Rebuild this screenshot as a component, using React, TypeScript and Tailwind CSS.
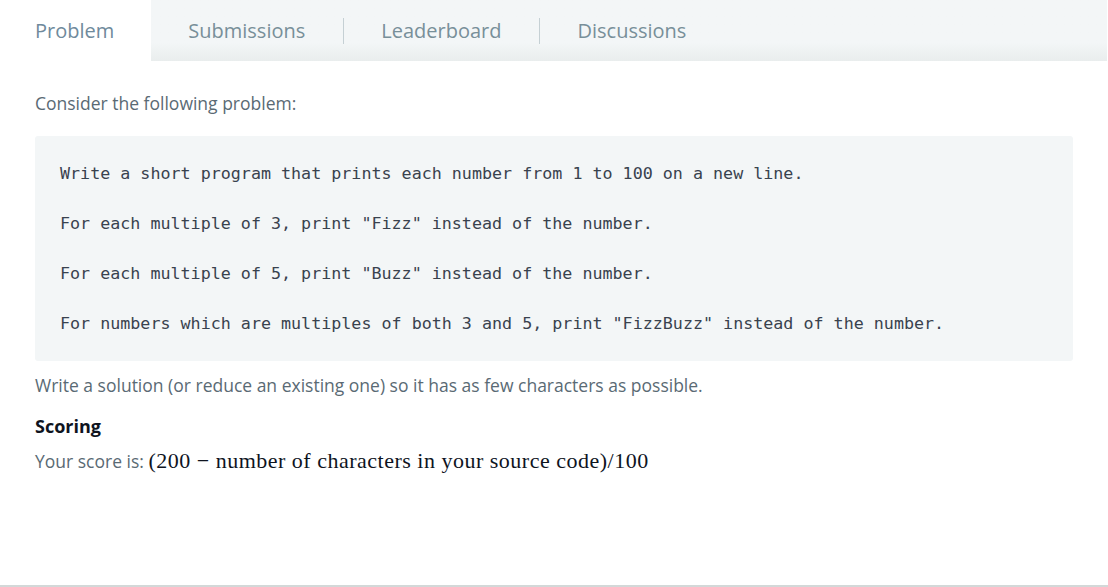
const tabs = ['Problem', 'Submissions', 'Leaderboard', 'Discussions']

const codeLines = [
  'Write a short program that prints each number from 1 to 100 on a new line.',
  'For each multiple of 3, print "Fizz" instead of the number.',
  'For each multiple of 5, print "Buzz" instead of the number.',
  'For numbers which are multiples of both 3 and 5, print "FizzBuzz" instead of the number.',
]

export default function App() {
  return (
    <div className="h-[587px] w-[1108px] bg-white flex flex-col border-b-2 border-[#d3d8d8] font-['Open_Sans',sans-serif] overflow-hidden">
      <div className="flex h-[61px] pr-px">
        <div className="flex items-center h-full pl-[35px] pr-[37px] bg-white text-[20px] text-[#6f8a9c]">
          Problem
        </div>
        <div className="flex-1 flex items-center h-full bg-gradient-to-b from-[#f3f6f7] from-70% to-[#e9eded] text-[20px] text-[#788f99]">
          {tabs.slice(1).map((t, i) => (
            <div key={t} className="flex items-center h-full">
              {i > 0 && <div className="w-px h-[26px] bg-[#c5d0d4]" />}
              <span className="pl-[37px] pr-[38px]">{t}</span>
            </div>
          ))}
        </div>
      </div>

      <div className="pl-[35px] pr-[35px]">
        <p className="mt-[30px] text-[17.5px] leading-6 text-[#5a6a74]">Consider the following problem:</p>

        <div className="mt-[21px] bg-[#f3f6f7] rounded-[3px] pl-[25px] pt-[25px] pb-[26px] flex flex-col gap-[26px] font-['DejaVu_Sans_Mono',monospace] text-[16.7px] leading-6 text-[#39424e]">
          {codeLines.map((l) => (
            <div key={l} className="whitespace-pre">{l}</div>
          ))}
        </div>

        <p className="mt-[12px] text-[17.5px] leading-6 text-[#5a6a74]">
          Write a solution (or reduce an existing one) so it has as few characters as possible.
        </p>
        <p className="mt-[17px] text-[18px] leading-6 font-bold text-[#0e141e]">Scoring</p>
        <p className="mt-[11px] text-[17.5px] leading-6 text-[#5a6a74]">
          Your score is:{' '}
          <span className="font-['Liberation_Serif',serif] text-[22px] tracking-[0.5px] text-[#0e141e]">
            (200 − number of characters in your source code)/100
          </span>
        </p>
      </div>
    </div>
  )
}
